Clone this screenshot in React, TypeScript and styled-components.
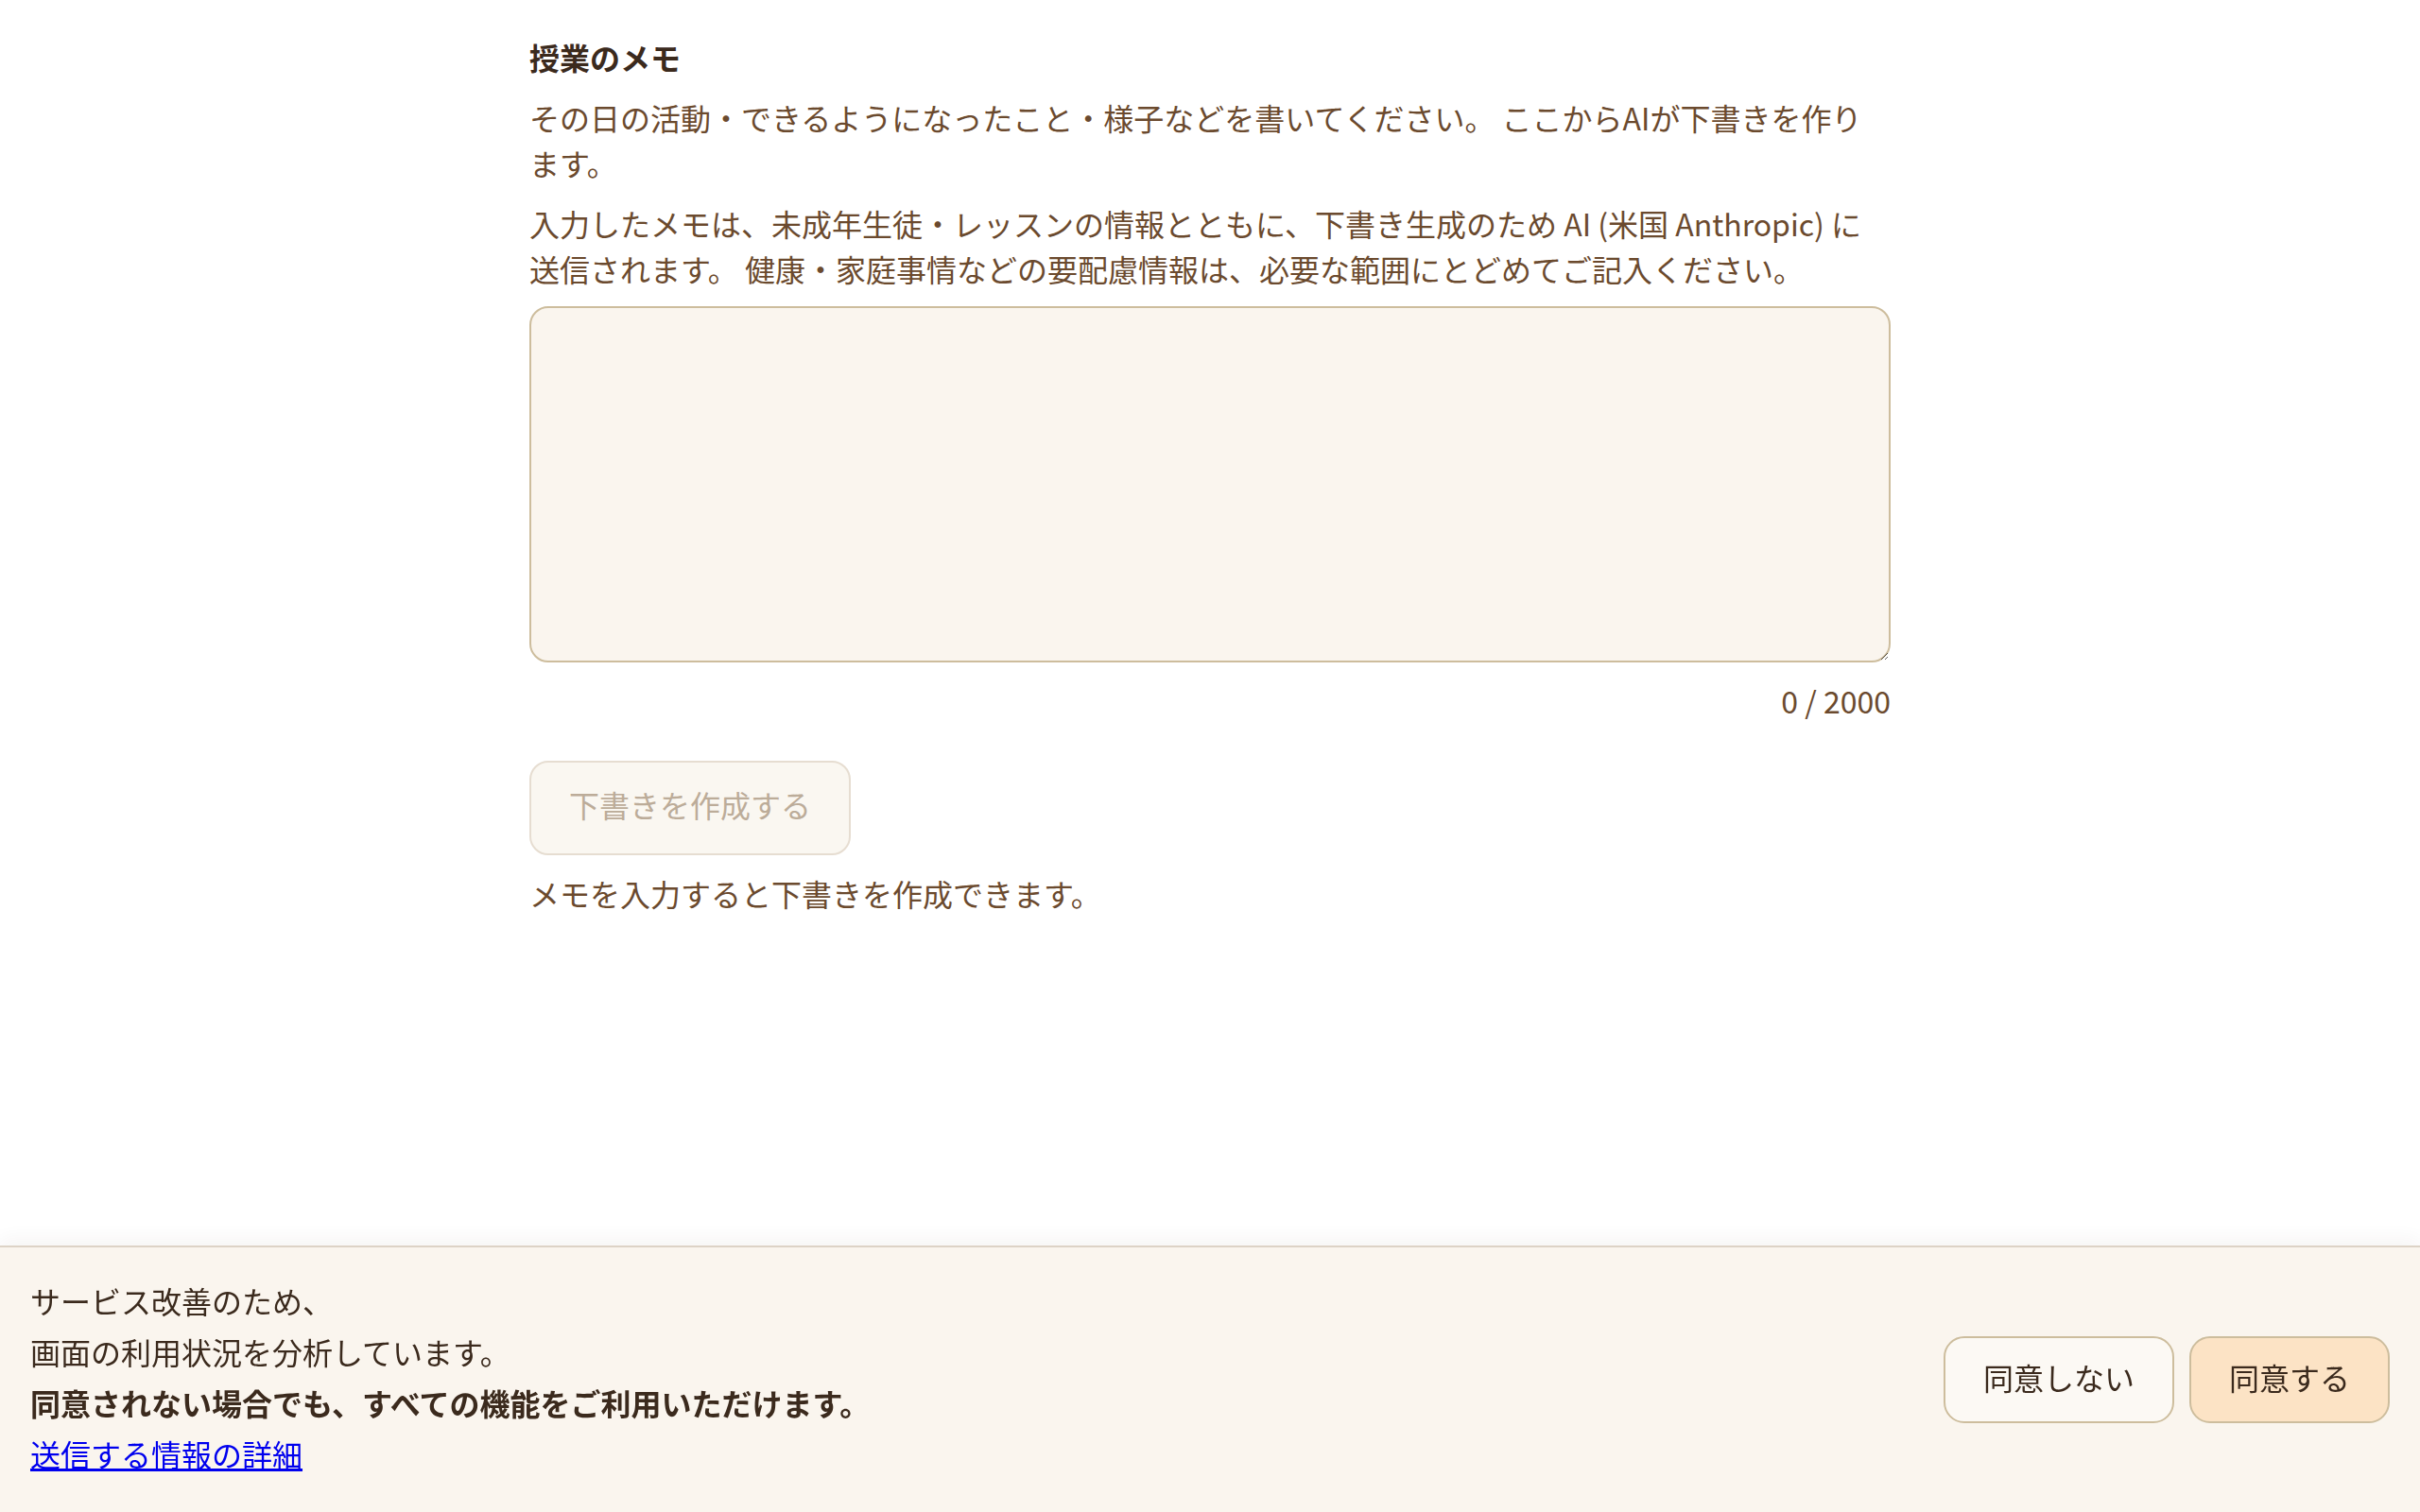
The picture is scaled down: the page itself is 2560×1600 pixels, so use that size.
import { useState } from 'react'
import styled, { createGlobalStyle } from 'styled-components'

const colors = {
  ink: '#3b2a1d',
  text: '#6b4a2e',
  border: '#cdbd9d',
  paper: '#faf5ee',
  disabledBg: '#faf7f1',
  disabledBorder: '#e6ddd1',
  disabledText: '#bcac99',
  accent: '#fce3c5',
}

const MAX = 2000

const GlobalStyle = createGlobalStyle`
  html, body {
    margin: 0;
    padding: 0;
    background: #ffffff;
  }
  body {
    font-family: "Noto Sans CJK JP", "Noto Sans", sans-serif;
    color: ${colors.text};
  }
  * {
    box-sizing: border-box;
  }
`

const App = () => {
  const [memo, setMemo] = useState('')

  return (
    <>
      <GlobalStyle />
      <Page>
        <Label htmlFor="memo">授業のメモ</Label>
        <Hint>
          その日の活動・できるようになったこと・様子などを書いてください。 ここからAIが下書きを作ります。
        </Hint>
        <Hint>
          入力したメモは、未成年生徒・レッスンの情報とともに、下書き生成のため AI (米国 Anthropic) に送信されます。
          健康・家庭事情などの要配慮情報は、必要な範囲にとどめてご記入ください。
        </Hint>
        <MemoArea
          id="memo"
          value={memo}
          maxLength={MAX}
          onChange={(e) => setMemo(e.target.value)}
        />
        <Counter>
          {memo.length} / {MAX}
        </Counter>
        <DraftButton disabled={memo.length === 0}>下書きを作成する</DraftButton>
        <Helper>メモを入力すると下書きを作成できます。</Helper>
      </Page>

      <ConsentBar>
        <ConsentText>
          <ConsentLine>サービス改善のため、</ConsentLine>
          <ConsentLine>画面の利用状況を分析しています。</ConsentLine>
          <ConsentLine $strong>同意されない場合でも、すべての機能をご利用いただけます。</ConsentLine>
          <ConsentLine>
            <DetailLink href="#details">送信する情報の詳細</DetailLink>
          </ConsentLine>
        </ConsentText>
        <ConsentActions>
          <ConsentButton>同意しない</ConsentButton>
          <ConsentButton $primary>同意する</ConsentButton>
        </ConsentActions>
      </ConsentBar>
    </>
  )
}

const Page = styled.main`
  display: flex;
  flex-direction: column;
  align-items: flex-start;
  max-width: 1440px;
  margin: 0 auto;
  padding: 36px 0 360px;
`

const Label = styled.label`
  font-size: 32px;
  line-height: 48px;
  font-weight: 700;
  color: ${colors.ink};
`

const Hint = styled.p`
  margin: 16px 0 0;
  font-size: 32px;
  line-height: 48px;
  color: ${colors.text};
`

const MemoArea = styled.textarea`
  display: block;
  width: 100%;
  height: 377px;
  margin-top: 16px;
  padding: 16px 20px;
  border: 2px solid ${colors.border};
  border-radius: 20px;
  background: ${colors.paper};
  color: ${colors.ink};
  font-family: inherit;
  font-size: 32px;
  line-height: 48px;
  outline: none;
`

const Counter = styled.div`
  align-self: flex-end;
  margin-top: 16px;
  font-size: 32px;
  line-height: 48px;
  color: ${colors.text};
`

const DraftButton = styled.button`
  margin-top: 40px;
  padding: 20px 40px 28px;
  border: 2px solid ${colors.disabledBorder};
  border-radius: 20px;
  background: ${colors.disabledBg};
  color: ${colors.disabledText};
  font-family: inherit;
  font-size: 32px;
  line-height: 48px;

  &:disabled {
    cursor: not-allowed;
  }
`

const Helper = styled.p`
  margin: 16px 0 0;
  font-size: 32px;
  line-height: 48px;
  color: ${colors.text};
`

const ConsentBar = styled.div`
  position: fixed;
  left: 0;
  right: 0;
  bottom: 0;
  display: flex;
  align-items: center;
  justify-content: space-between;
  gap: 32px;
  padding: 32px;
  border-top: 2px solid #ddd3c6;
  background: ${colors.paper};
  box-shadow: 0 -6px 20px rgba(60, 40, 20, 0.05);
`

const ConsentText = styled.div`
  display: flex;
  flex-direction: column;
  margin: -3px 0 3px;
`

const ConsentLine = styled.p<{ $strong?: boolean }>`
  margin: 0;
  font-size: 32px;
  line-height: 54px;
  font-weight: ${(p) => (p.$strong ? 700 : 400)};
  color: ${colors.ink};
`

const DetailLink = styled.a`
  color: #0000ee;
  text-decoration: underline;
`

const ConsentActions = styled.div`
  display: flex;
  gap: 16px;
`

const ConsentButton = styled.button<{ $primary?: boolean }>`
  padding: 17px 40px 23px;
  border: 2px solid ${colors.border};
  border-radius: 22px;
  background: ${(p) => (p.$primary ? colors.accent : '#fcf9f4')};
  color: ${colors.ink};
  font-family: inherit;
  font-size: 32px;
  line-height: 48px;
  cursor: pointer;
`

export default App
